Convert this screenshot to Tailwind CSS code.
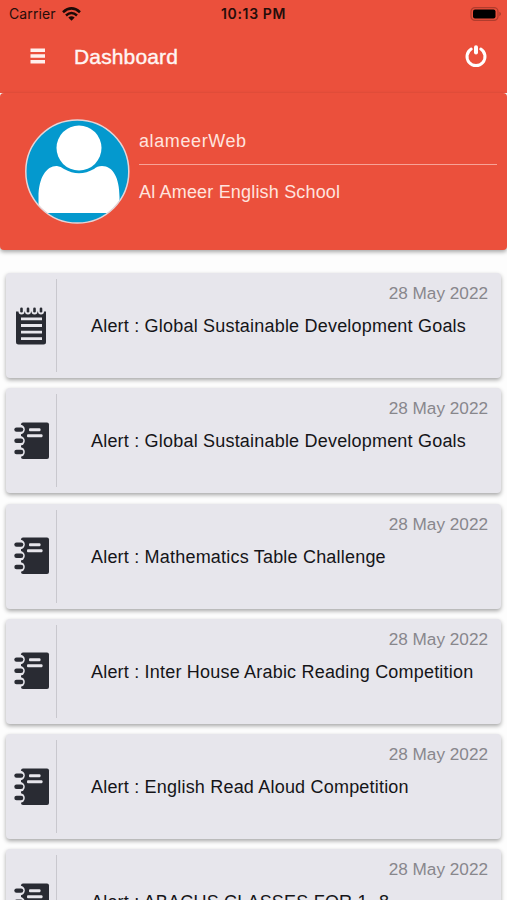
<!DOCTYPE html>
<html lang="en">
<head>
<meta charset="utf-8">
<title>Dashboard</title>
<script src="https://cdn.jsdelivr.net/npm/@tailwindcss/browser@4"></script>
</head>
<body class="h-[900px] w-[507px] overflow-hidden bg-[#fdfdfd] font-['Liberation_Sans',Arial,sans-serif]">
<svg class="hidden">
  <symbol id="notebook" viewBox="0 0 36 38">
    <path d="M9 .5H33Q35 .5 35 2.500V35Q35 37 33 37H9Q7 37 7 35V2.500Q7 .5 9 .5Z" fill="#292b33"/>
    <g fill="#e7e6ec"><circle cx="6" cy="7.500" r="4.800"/><circle cx="6" cy="18.800" r="4.800"/><circle cx="6" cy="30" r="4.800"/><rect x="15" y="6.300" width="11.500" height="3" rx="1"/><rect x="13" y="12.200" width="15.500" height="3" rx="1"/></g>
    <g fill="#292b33"><rect x=".3" y="5.400" width="9" height="4.400" rx="2.200"/><rect x=".3" y="16.600" width="9" height="4.400" rx="2.200"/><rect x=".3" y="27.800" width="9" height="4.400" rx="2.200"/></g>
  </symbol>
  <symbol id="notepad" viewBox="0 0 36 38">
    <path d="M2.500 4.500H32V35Q32 37.500 29.500 37.500H4.500Q2 37.500 2 35V4.500Z" fill="#292b33"/>
    <g fill="#e7e6ec"><circle cx="7.500" cy="4.500" r="3"/><circle cx="14" cy="4.500" r="3"/><circle cx="20.500" cy="4.500" r="3"/><circle cx="27" cy="4.500" r="3"/><path d="M7 10.500h21v2.800H7zM7 17.100h21v2.800H7zM7 23.700h21v2.800H7zM7 30.200h21v2.800H7z"/></g>
    <g fill="#292b33"><rect x="6.200" y=".5" width="2.600" height="5" rx="1.300"/><rect x="12.700" y=".5" width="2.600" height="5" rx="1.300"/><rect x="19.200" y=".5" width="2.600" height="5" rx="1.300"/><rect x="25.700" y=".5" width="2.600" height="5" rx="1.300"/></g>
  </symbol>
</svg>
<header class="h-[93px] bg-[#eb503c]">
  <div class="relative flex h-[27px] items-center pl-[9px] pr-[5px] font-['Inter',sans-serif] text-[14px] text-[#260d0a]">
    <span class="tracking-[0.1px]">Carrier</span>
    <svg class="ml-[6px] h-[14px] w-[19px]" viewBox="0 0 19 14" fill="none" stroke="#1d0a07" stroke-width="2.600"><path d="M1 5.200Q9.500-2.400 18 5.200M4 8.400Q9.500 3.600 15 8.400"/><path d="M6.300 10.500Q9.500 7.800 12.700 10.500L9.500 13.700Z" fill="#1d0a07" stroke="none"/></svg>
    <span class="absolute left-[221px] whitespace-nowrap text-[14px] font-semibold tracking-[0.65px]">10:13 PM</span>
    <svg class="ml-auto h-[14px] w-[32px]" viewBox="0 0 32 14"><rect x="1" y=".6" width="27" height="12.800" rx="4" fill="none" stroke="#b03c2d" stroke-width="1.200"/><rect x="3" y="2.600" width="22.500" height="8.800" rx="2" fill="#000"/><path d="M29.500 4.800Q32 7 29.500 9.200Z" fill="#923428"/></svg>
  </div>
  <div class="flex h-[58px] items-center pl-[30px] pr-[19px]">
    <svg class="h-[16px] w-[16px]" viewBox="0 0 16 16" fill="#fff0ed"><path d="M.5 .5h14.500v3.500H.5zM.5 6.300h14.500v3.500H.5zM.5 12h14.500v3.500H.5z"/></svg>
    <h1 class="ml-[28px] text-[21px] leading-none font-normal tracking-[0.15px] text-[#fff5f3] [-webkit-text-stroke:0.4px_#fff5f3]">Dashboard</h1>
    <svg class="ml-auto h-[24px] w-[24px]" viewBox="0 0 24 24" fill="none" stroke="#fff" stroke-linecap="round"><path d="M7.200 5A9 9 0 1 0 16.800 5" stroke-width="3"/><path d="M12 3.200v5.300" stroke-width="4"/></svg>
  </div>
</header>
<section class="flex h-[157px] rounded-[4px] bg-[#eb503c] pl-[25px] pr-[10px] pt-[26px] shadow-[0_2px_4px_rgba(0,0,0,0.35)]">
  <svg class="h-[105px] w-[105px] shrink-0" viewBox="0 0 105 105">
    <defs><clipPath id="disc"><circle cx="52.300" cy="52.500" r="51.500"/></clipPath></defs>
    <g clip-path="url(#disc)"><rect width="105" height="105" fill="#0499ce"/><path d="M13.500 94V78C13.500 58 22 46.500 32 47Q36 47.500 39 50Q54 58.500 69 50Q72 47 77 47C88 47 94.500 59 94.500 78V94Z" fill="#fff"/><circle cx="54" cy="29" r="22.500" fill="#fff"/></g>
    <circle cx="52.300" cy="52.500" r="51.500" fill="none" stroke="#e4d5d8" stroke-width="1.500"/>
  </svg>
  <div class="ml-[9px] flex-1 text-[18px] text-[#ffe3de]">
    <div class="flex h-[46px] items-center border-b border-[#f7a397] pb-[1px] tracking-[0.6px]">alameerWeb</div>
    <div class="flex h-[55px] items-center tracking-[0.18px]">Al Ameer English School</div>
  </div>
</section>
<main id="list" class="flex flex-col gap-[10.3px] px-[6px] pt-[23px]"></main>
<script>
const alerts = [
  ["notepad", "Global Sustainable Development Goals"],
  ["notebook", "Global Sustainable Development Goals"],
  ["notebook", "Mathematics Table Challenge"],
  ["notebook", "Inter House Arabic Reading Competition"],
  ["notebook", "English Read Aloud Competition"],
  ["notebook", "ABACUS CLASSES FOR 1 -8"]
];
document.getElementById("list").innerHTML = alerts.map(([icon, title]) => `
  <article class="flex h-[105px] shrink-0 rounded-[4px] bg-[#e7e6ec] py-[6px] shadow-[0_2px_4px_rgba(0,0,0,0.35)]">
    <div class="flex w-[51px] shrink-0 items-center border-r border-[#c9c8ce] pl-[8px]"><svg class="h-[38px] w-[36px]"><use href="#${icon}"/></svg></div>
    <div class="flex-1 pl-[34px] pr-[13px]">
      <div class="pt-[4px] text-right text-[17.200px] leading-[20px] text-[#88878c]">28 May 2022</div>
      <div class="mt-[13px] whitespace-nowrap text-[18px] leading-[20px] tracking-[0.2px] text-[#151518]">Alert : ${title}</div>
    </div>
  </article>`).join("");
</script>
</body>
</html>
